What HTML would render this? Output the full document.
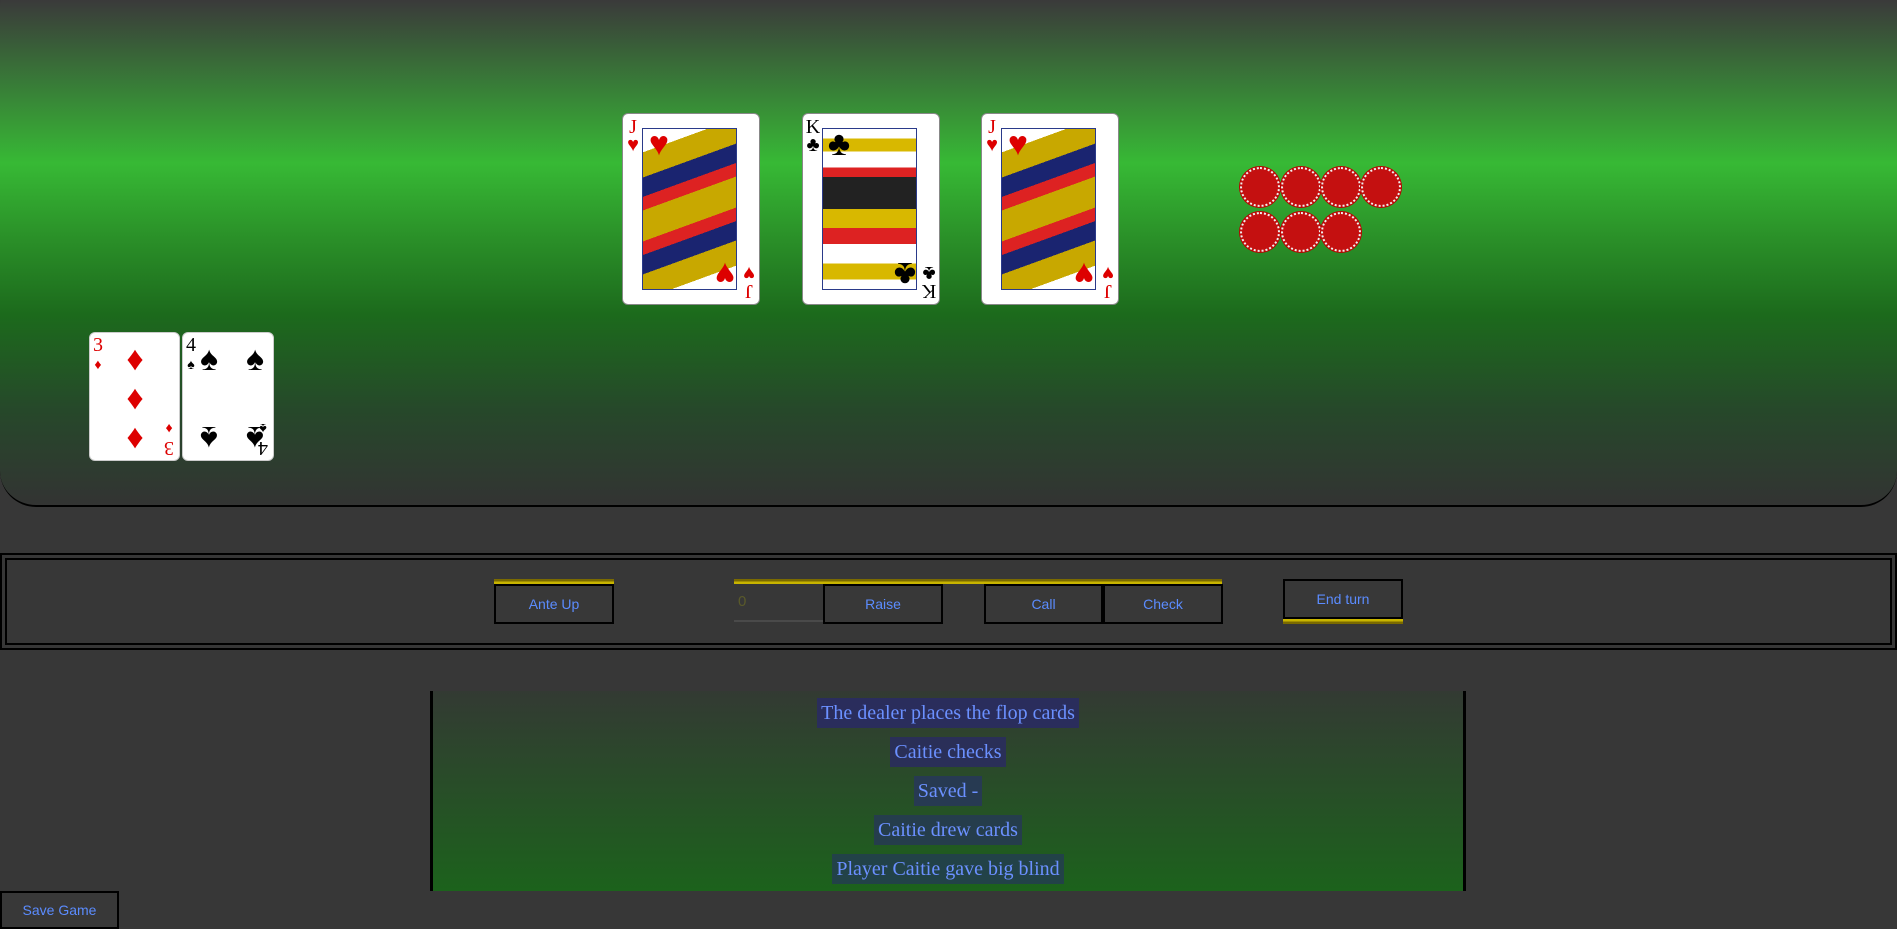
<!DOCTYPE html>
<html><head><meta charset="utf-8"><style>
*{margin:0;padding:0;box-sizing:border-box}
body{width:1897px;height:929px;background:#373737;position:relative;overflow:hidden;font-family:"Liberation Sans",sans-serif}
.table{position:absolute;left:0;top:-30px;width:1897px;height:537px;border-radius:36px;border-bottom:2px solid #000;
background:linear-gradient(to bottom,#3a3a3a 30px,#37b935 193px,#2a8f28 270px,#1c6a1c 345px,#26482a 440px,#333 537px)}
.card{position:absolute;background:#fff;border-radius:6px;border:1px solid #888;overflow:hidden;font-family:"Liberation Serif",serif}
.rk{position:absolute;font-size:20px;line-height:18px;text-align:center;width:16px}
.red{color:#d00}.blk{color:#000}
.pip{position:absolute;font-size:34px;line-height:34px;width:40px;text-align:center}
.face{position:absolute;left:19px;top:14px;width:95px;height:162px;border:1px solid #2a3a8a;
background:linear-gradient(160deg,#fff 0 12%,#c8a800 12% 25%,#1a2470 25% 35%,#d22 35% 42%,#c8a800 42% 58%,#d22 58% 65%,#1a2470 65% 75%,#c8a800 75% 88%,#fff 88%)}
.chip{position:absolute;width:40px;height:40px;border-radius:50%;background:#c41010;border:2px dotted #f0f0f0;box-shadow:0 0 0 1px #b00}
.panel{position:absolute;left:0;top:553px;width:1897px;height:97px;border:2px solid #000}
.panel .in{position:absolute;left:3px;top:3px;right:3px;bottom:3px;border:2px solid #000}
.btn{position:absolute;height:40px;border:2px solid #000;background:#383838;color:#5b8cff;font-size:14px;text-align:center;line-height:36px}
.gold{position:absolute;height:5px;background:linear-gradient(#7a6a00 50%,#c8b400 50%)}
.log{position:absolute;left:430px;top:691px;width:1036px;height:200px;border-left:3px solid #000;border-right:3px solid #000;
background:linear-gradient(#333a33,#1c621c);text-align:center;padding-top:7px}
.log div{display:inline-block;font-family:"Liberation Serif",serif;font-size:20px;color:#6b90ff;padding:2px 4px;line-height:26px;margin-bottom:9px}
</style></head><body>
<div class="table"></div>

<div class="card" style="left:622px;top:113px;width:138px;height:192px">
<div class="face"></div>
<div class="rk red" style="left:2px;top:4px">J<br>♥</div>
<div class="rk red" style="right:2px;bottom:4px;transform:rotate(180deg)">J<br>♥</div>
<div class="pip red" style="left:16px;top:14px">♥</div><div class="pip red" style="right:14px;bottom:14px;transform:rotate(180deg)">♥</div>
</div>
<div class="card" style="left:802px;top:113px;width:138px;height:192px">
<div class="face" style="background:linear-gradient(180deg,#fff 0 6%,#d8b800 6% 14%,#fff 14% 24%,#d22 24% 30%,#222 30% 50%,#d8b800 50% 62%,#d22 62% 72%,#fff 72% 84%,#d8b800 84% 94%,#fff 94%)"></div>
<div class="rk blk" style="left:2px;top:4px">K<br>♣</div>
<div class="rk blk" style="right:2px;bottom:4px;transform:rotate(180deg)">K<br>♣</div>
<div class="pip blk" style="left:16px;top:14px">♣</div><div class="pip blk" style="right:14px;bottom:14px;transform:rotate(180deg)">♣</div>
</div>
<div class="card" style="left:981px;top:113px;width:138px;height:192px">
<div class="face"></div>
<div class="rk red" style="left:2px;top:4px">J<br>♥</div>
<div class="rk red" style="right:2px;bottom:4px;transform:rotate(180deg)">J<br>♥</div>
<div class="pip red" style="left:16px;top:14px">♥</div><div class="pip red" style="right:14px;bottom:14px;transform:rotate(180deg)">♥</div>
</div>

<div class="chip" style="left:1240px;top:167px"></div><div class="chip" style="left:1281px;top:167px"></div>
<div class="chip" style="left:1321px;top:167px"></div><div class="chip" style="left:1361px;top:167px"></div>
<div class="chip" style="left:1240px;top:212px"></div><div class="chip" style="left:1281px;top:212px"></div>
<div class="chip" style="left:1321px;top:212px"></div>

<div class="card" style="left:89px;top:332px;width:91px;height:129px;border-color:#ccc">
<div class="rk red" style="left:0;top:3px">3<br><span style="font-size:14px">♦</span></div>
<div class="rk red" style="right:2px;bottom:3px;transform:rotate(180deg)">3<br><span style="font-size:14px">♦</span></div>
<div class="pip red" style="left:25px;top:10px">♦</div><div class="pip red" style="left:25px;top:49px">♦</div><div class="pip red" style="left:25px;top:88px">♦</div>
</div>
<div class="card" style="left:182px;top:332px;width:92px;height:129px;border-color:#ccc">
<div class="rk blk" style="left:0;top:3px">4<br><span style="font-size:14px">♠</span></div>
<div class="rk blk" style="right:2px;bottom:3px;transform:rotate(180deg)">4<br><span style="font-size:14px">♠</span></div>
<div class="pip blk" style="left:6px;top:10px">♠</div><div class="pip blk" style="left:52px;top:10px">♠</div>
<div class="pip blk" style="left:6px;top:87px;transform:rotate(180deg)">♠</div><div class="pip blk" style="left:52px;top:87px;transform:rotate(180deg)">♠</div>
</div>

<div class="panel"><div class="in"></div></div>
<div class="gold" style="left:494px;top:579px;width:120px"></div>
<div class="btn" style="left:494px;top:584px;width:120px">Ante Up</div>
<div class="gold" style="left:734px;top:579px;width:488px"></div>
<div style="position:absolute;left:734px;top:584px;width:89px;height:38px;border-bottom:2px solid #4a4a4a;color:#5a5a2a;font-size:15px;line-height:36px;padding-left:4px">0</div>
<div class="btn" style="left:823px;top:584px;width:120px">Raise</div>
<div class="btn" style="left:984px;top:584px;width:119px">Call</div>
<div class="btn" style="left:1103px;top:584px;width:120px">Check</div>
<div class="btn" style="left:1283px;top:579px;width:120px">End turn</div>
<div class="gold" style="left:1283px;top:619px;width:120px;background:linear-gradient(#c8b400 50%,#7a6a00 50%)"></div>

<div class="log">
<div style="background:#2a2d5c">The dealer places the flop cards</div><br>
<div style="background:#2a2f58">Caitie checks</div><br>
<div style="background:#273a52">Saved -</div><br>
<div style="background:#253d4c">Caitie drew cards</div><br>
<div style="background:#224248">Player Caitie gave big blind</div>
</div>

<div class="btn" style="left:0;top:891px;width:119px;height:38px;font-size:14px;line-height:34px">Save Game</div>
</body></html>
